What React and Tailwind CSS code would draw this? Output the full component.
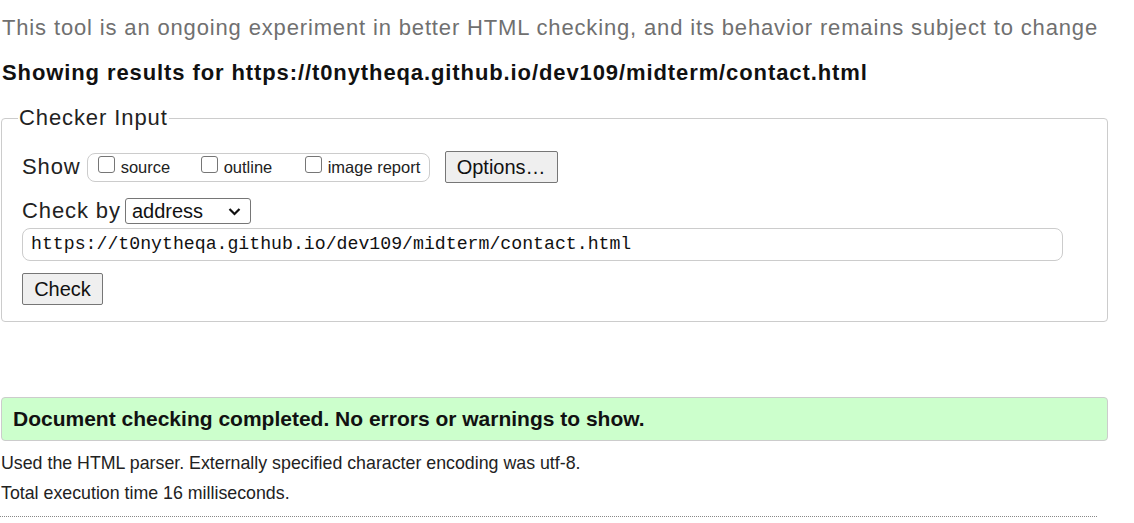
import React from 'react';

function Box({ label }) {
    return (
        <label className="flex items-center">
            <span className="shrink-0 w-[17px] h-[17px] border border-[#767676] rounded-[3px] bg-white mr-[6px] -mt-[5px]" />
            <span className="text-[16.5px] text-[#222]">{label}</span>
        </label>
    );
}

export default function App() {
    return (
        <div className="w-[1134px] h-[523px] overflow-hidden bg-white text-[#222] font-['Liberation_Sans',Arial,sans-serif]">
            <p className="pl-[2px] pt-[16px] text-[22px] tracking-[0.85px] leading-[24px] text-[#707070] whitespace-nowrap">
                This tool is an ongoing experiment in better HTML checking, and its behavior remains subject to change
            </p>
            <h2 className="pl-[2px] mt-[21px] text-[22px] tracking-[0.9px] leading-[24px] font-bold text-[#111] whitespace-nowrap">
                Showing results for https://t0nytheqa.github.io/dev109/midterm/contact.html
            </h2>

            <fieldset className="mt-[21px] ml-[1px] w-[1107px] h-[216px] border border-[#ccc] rounded-[4px] px-[20px]">
                <legend className="ml-[-4px] px-[1px] text-[22px] tracking-[0.9px] leading-[24px] text-[#222]">Checker Input</legend>

                <div className="flex items-center mt-[21px]">
                    <span className="text-[22px] tracking-[0.9px] leading-[24px]">Show</span>
                    <div className="ml-[6px] w-[343px] h-[29px] border border-[#ccc] rounded-[8px] flex items-center pl-[10px]">
                        <div className="w-[103px]"><Box label="source" /></div>
                        <div className="w-[104px]"><Box label="outline" /></div>
                        <Box label="image report" />
                    </div>
                    <button className="ml-[15px] w-[113px] h-[32px] bg-[#efefef] border border-[#767676] rounded-[2px] text-[20px] text-[#111]">
                        Options…
                    </button>
                </div>

                <div className="flex items-center mt-[15px]">
                    <span className="text-[22px] tracking-[0.9px] leading-[24px]">Check by</span>
                    <div className="ml-[4px] w-[126px] h-[26px] border border-[#767676] rounded-[3px] flex items-center justify-between pl-[6px] pr-[9px]">
                        <span className="text-[20px] leading-[22px] text-[#111]">address</span>
                        <svg width="13" height="9" viewBox="0 0 13 9" fill="none">
                            <path d="M1.5 2 L6.5 7 L11.5 2" stroke="#111" strokeWidth="2.2" />
                        </svg>
                    </div>
                </div>

                <div className="mt-[4px] w-[1041px] h-[33px] border border-[#ccc] rounded-[8px] flex items-center pl-[8px]">
                    <span className="font-['Liberation_Mono',monospace] text-[18.2px] text-[#111]">
                        https://t0nytheqa.github.io/dev109/midterm/contact.html
                    </span>
                </div>

                <button className="mt-[12px] w-[81px] h-[32px] bg-[#efefef] border border-[#767676] rounded-[2px] text-[20px] text-[#111]">
                    Check
                </button>
            </fieldset>

            <div className="mt-[75px] ml-[1px] w-[1107px] h-[44px] bg-[#ccffcc] border border-[#ccc] rounded-[4px] flex items-center pl-[11px]">
                <span className="text-[21px] font-bold text-[#111]">
                    Document checking completed. No errors or warnings to show.
                </span>
            </div>

            <p className="pl-[1px] mt-[12px] text-[17.8px] leading-[20px] text-[#222] whitespace-nowrap">
                Used the HTML parser. Externally specified character encoding was utf-8.
            </p>
            <p className="pl-[1px] mt-[10px] text-[17.8px] leading-[20px] text-[#222] whitespace-nowrap">
                Total execution time 16 milliseconds.
            </p>
            <div className="mt-[13px] w-[1097px] border-t border-dotted border-[#888]" />
        </div>
    );
}
